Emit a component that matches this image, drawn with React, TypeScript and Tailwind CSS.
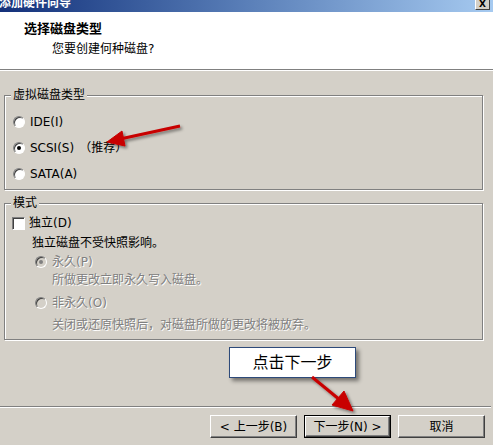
import React from "react";

const font = "font-['DejaVu_Sans','Noto_Sans_CJK_SC',sans-serif]";

const Radio = ({ checked, disabled }: { checked?: boolean; disabled?: boolean }) => (
  <span
    className={`relative inline-flex h-[12px] w-[12px] shrink-0 items-center justify-center rounded-full border border-[#808080] border-r-white border-b-white shadow-[inset_1px_1px_0_#404040] ${
      disabled ? "bg-[#d4d0c8]" : "bg-white"
    }`}
  >
    {checked && (
      <span className={`h-[4px] w-[4px] rounded-full ${disabled ? "bg-[#808080]" : "bg-black"}`} />
    )}
  </span>
);

const Button = ({ label, primary }: { label: string; primary?: boolean }) => (
  <div className={`h-[23px] w-[87px] ${primary ? "border border-black" : ""}`}>
    <div className="flex h-full w-full items-center justify-center border border-t-white border-l-white border-r-[#404040] border-b-[#404040] bg-[#d4d0c8] text-[12px] leading-none text-black shadow-[inset_-1px_-1px_0_#808080]">
      {label}
    </div>
  </div>
);

const Group = ({ title, className, children }: { title: string; className: string; children: React.ReactNode }) => (
  <div className={`relative ml-[4px] w-[479px] border border-[#808080] shadow-[inset_1px_1px_0_#fff,1px_1px_0_#fff] ${className}`}>
    <span className="absolute left-[6px] top-[-9px] bg-[#d4d0c8] px-[2px] text-[12px] leading-[16px] text-black">
      {title}
    </span>
    {children}
  </div>
);

const dim = "text-[#808080] [text-shadow:1px_1px_0_#fff]";

export default function App() {
  return (
    <div className={`relative flex h-[445px] w-[493px] flex-col overflow-hidden bg-[#d4d0c8] ${font}`}>
      {/* title bar, cut at the top */}
      <div className="flex h-[12px] shrink-0 items-start justify-between bg-gradient-to-r from-[#14307a] via-[#5a7fb8] to-[#a6caf0]">
        <span className="ml-[-1px] mt-[-4px] text-[12px] font-bold leading-[14px] text-white">添加硬件向导</span>
        <span className="mr-[3px] mt-[-3px] flex h-[13px] w-[15px] items-end justify-center border border-t-white border-l-white border-r-[#404040] border-b-[#404040] bg-[#d4d0c8] text-[9px] font-bold leading-[10px] text-black">
          X
        </span>
      </div>

      {/* header */}
      <div className="h-[59px] shrink-0 border-b border-b-white bg-white">
        <div className="h-[58px] border-b border-b-[#808080] pl-[24px] pt-[9px]">
          <div className="text-[13px] font-bold leading-[16px] text-black">选择磁盘类型</div>
          <div className="ml-[28px] mt-[4px] text-[12px] leading-[16px] text-black">您要创建何种磁盘?</div>
        </div>
      </div>

      <Group title="虚拟磁盘类型" className="mt-[24px] h-[95px] pt-[13px]">
        <div className="flex h-[26px] items-center pl-[8px] text-[12px] text-black">
          <Radio />
          <span className="ml-[5px]">IDE(I)</span>
        </div>
        <div className="flex h-[26px] items-center pl-[8px] text-[12px] text-black">
          <Radio checked />
          <span className="ml-[5px]">SCSI(S)</span>
          <span className="ml-[5px]">（推荐）</span>
        </div>
        <div className="flex h-[26px] items-center pl-[8px] text-[12px] text-black">
          <Radio />
          <span className="ml-[5px]">SATA(A)</span>
        </div>
      </Group>

      <Group title="模式" className="mt-[13px] h-[137px] pt-[9px] text-[12px]">
        <div className="flex h-[20px] items-center pl-[7px] text-black">
          <span className="h-[13px] w-[13px] shrink-0 border border-[#808080] border-r-white border-b-white bg-white shadow-[inset_1px_1px_0_#404040]" />
          <span className="ml-[4px]">独立(D)</span>
        </div>
        <div className="flex h-[20px] items-center pl-[27px] text-black">独立磁盘不受快照影响。</div>
        <div className="flex h-[18px] items-center pl-[30px]">
          <Radio checked disabled />
          <span className={`ml-[5px] ${dim}`}>永久(P)</span>
        </div>
        <div className={`flex h-[18px] items-center pl-[47px] ${dim}`}>所做更改立即永久写入磁盘。</div>
        <div className="mt-[4px] flex h-[20px] items-center pl-[30px]">
          <Radio disabled />
          <span className={`ml-[5px] ${dim}`}>非永久(O)</span>
        </div>
        <div className={`mt-[2px] flex h-[20px] items-center pl-[47px] ${dim}`}>
          关闭或还原快照后，对磁盘所做的更改将被放弃。
        </div>
      </Group>

      <div className="mt-[66px] h-[2px] w-[491px] shrink-0 border-t border-t-[#808080] border-b border-b-white" />

      <div className="mt-[7px] flex justify-end gap-[7px] pr-[8px]">
        <Button label="< 上一步(B)" />
        <Button label="下一步(N) >" primary />
        <Button label="取消" />
      </div>

      {/* callout */}
      <div className="absolute left-[229px] top-[347px] flex h-[31px] w-[127px] items-center justify-center border border-[#2d4a7a] bg-white text-[16px] leading-none text-black shadow-[3px_3px_4px_rgba(0,0,0,0.45)]">
        点击下一步
      </div>

      {/* red arrows */}
      <svg className="pointer-events-none absolute left-0 top-0" width="493" height="445">
        <defs>
          <filter id="sh" x="-20%" y="-20%" width="140%" height="140%">
            <feDropShadow dx="2" dy="2" stdDeviation="1.5" floodColor="#000" floodOpacity="0.45" />
          </filter>
        </defs>
        <g filter="url(#sh)" fill="#c80000" stroke="#c80000">
          <line x1="180" y1="126" x2="120" y2="139" strokeWidth="3" />
          <polygon points="107,142 125,146 122,131" strokeWidth="1" />
          <line x1="312" y1="377" x2="340" y2="400" strokeWidth="3" />
          <polygon points="353,411 332,405 344,391" strokeWidth="1" />
        </g>
      </svg>
    </div>
  );
}
